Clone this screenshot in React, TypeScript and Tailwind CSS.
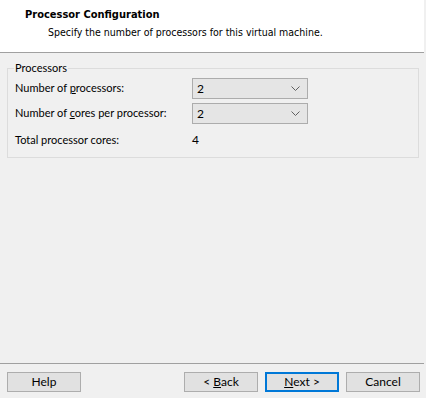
import React from 'react';

const ui = { fontFamily: 'Lato, "Noto Sans", sans-serif' };
const tahoma = { fontFamily: '"DejaVu Sans Condensed", "DejaVu Sans", sans-serif' };

function Chevron() {
  return (
    <svg width="9" height="5" viewBox="0 0 9 5" className="text-[#606060]">
      <path d="M0.5 0.5 L4.5 4.5 L8.5 0.5" fill="none" stroke="currentColor" strokeWidth="1" />
    </svg>
  );
}

function Combo({ value }: { value: string }) {
  return (
    <div className="w-[116px] h-[21px] bg-[#e5e5e5] border border-[#acacac] flex items-center justify-between pl-[4px] pr-[7px] text-[12px] text-black">
      <span>{value}</span>
      <Chevron />
    </div>
  );
}

function Button({ children, primary }: { children: React.ReactNode; primary?: boolean }) {
  return (
    <button
      className={
        'w-[74px] h-[20px] bg-[#e1e1e1] text-[12px] text-black flex items-center justify-center leading-none ' +
        (primary ? 'border-2 border-[#0078d7]' : 'border border-[#adadad]')
      }
    >
      {children}
    </button>
  );
}

export default function App() {
  return (
    <div className="w-[426px] h-[398px] bg-[#f0f0f0] flex flex-col" style={ui}>
      <div className="h-[53px] bg-white border-b border-[#a0a0a0] mr-[2px] pt-[8px]" style={tahoma}>
        <div className="pl-[25px] text-[11px] font-bold text-black leading-[14px]">Processor Configuration</div>
        <div className="pl-[48px] mt-[3px] text-[10.5px] text-black leading-[14px]">
          Specify the number of processors for this virtual machine.
        </div>
      </div>

      <div className="flex-1 pt-[8px]">
        <fieldset className="mx-[7px] border border-[#dcdcdc] pl-[7px] pr-[7px] pb-[5px] pt-[3px]">
          <legend className="-ml-[1px] px-[1px] text-[11px] leading-[14px] text-black">Processors</legend>
          <div className="flex flex-col gap-[4px] text-[11px] text-black whitespace-nowrap">
            <div className="flex items-center">
              <span className="w-[177px] shrink-0">
                Number of <span className="underline underline-offset-1">p</span>rocessors:
              </span>
              <Combo value="2" />
            </div>
            <div className="flex items-center">
              <span className="w-[177px] shrink-0">
                Number of <span className="underline underline-offset-1">c</span>ores per processor:
              </span>
              <Combo value="2" />
            </div>
            <div className="flex items-center h-[24px]">
              <span className="w-[177px] shrink-0">Total processor cores:</span>
              <span className="text-[12px]">4</span>
            </div>
          </div>
        </fieldset>
      </div>

      <div className="h-[35px] flex flex-col">
        <div className="border-t border-[#a0a0a0] mr-[2px]" />
        <div className="flex items-start pt-[8px] pl-[7px] pr-[6px]">
          <Button>Help</Button>
          <div className="flex-1" />
          <div className="flex gap-[7px]">
            <Button>
              &lt;&nbsp;<span className="underline underline-offset-1">B</span>ack
            </Button>
            <Button primary>
              <span className="underline underline-offset-1">N</span>ext &gt;
            </Button>
            <Button>Cancel</Button>
          </div>
        </div>
      </div>
    </div>
  );
}
